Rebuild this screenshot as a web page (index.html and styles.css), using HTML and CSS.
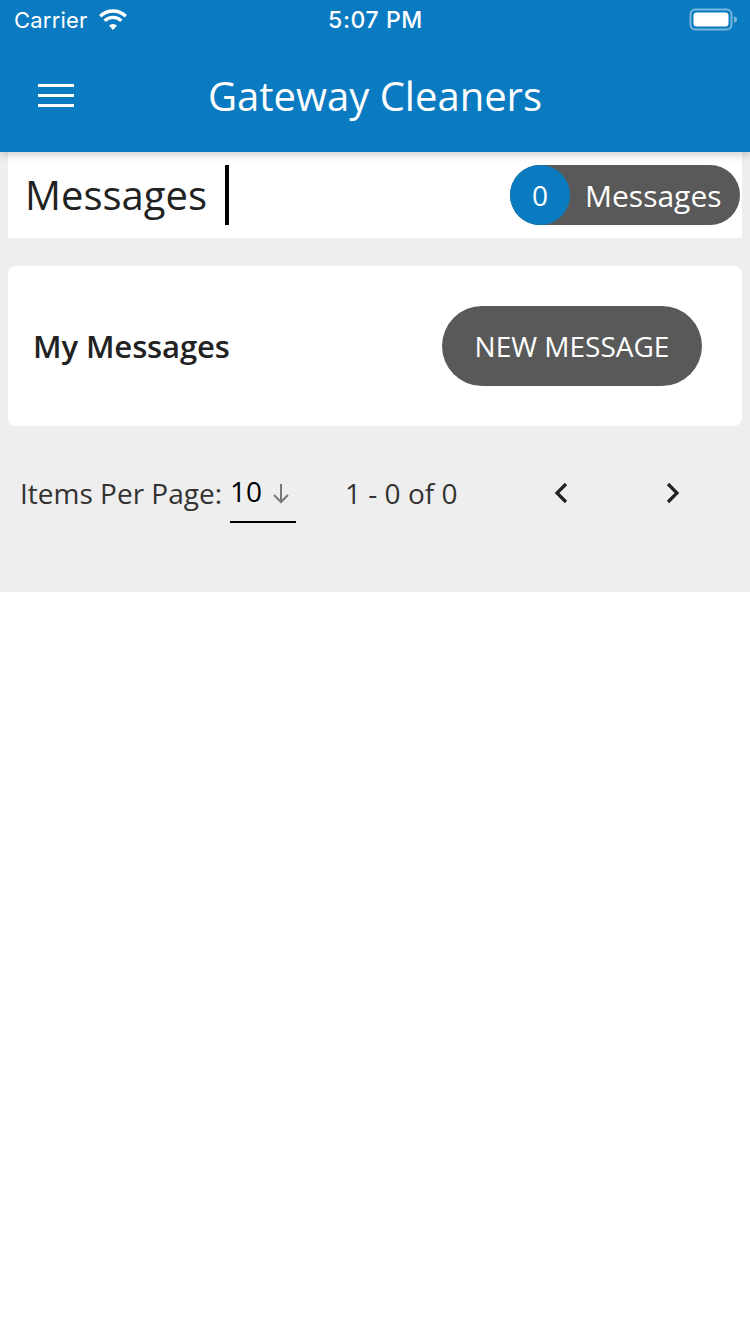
FILE: index.html
```html
<!DOCTYPE html>
<html>
<head>
<meta charset="utf-8">
<link rel="stylesheet" href="styles.css">
</head>
<body>
<header class="topbar">
  <div class="status">
    <div class="status-left">
      <span class="carrier">Carrier</span>
      <svg class="wifi" width="30" height="23" viewBox="0 0 30 23">
        <path d="M15 22 L11 17.6 A6 6 0 0 1 19 17.6 Z" fill="#fff"/>
        <path d="M6.6 12.8 A12 12 0 0 1 23.4 12.8" stroke="#fff" stroke-width="3.4" fill="none"/>
        <path d="M2.2 8.2 A18.5 18.5 0 0 1 27.8 8.2" stroke="#fff" stroke-width="3.4" fill="none"/>
      </svg>
    </div>
    <div class="time">5:07 PM</div>
    <div class="status-right">
      <svg class="battery" width="48" height="24" viewBox="0 0 48 24">
        <rect x="1.5" y="1.5" width="41" height="20" rx="5" fill="none" stroke="#ffffff" stroke-opacity="0.45" stroke-width="2"/>
        <rect x="4.5" y="4.5" width="35" height="14" rx="3" fill="#fff"/>
        <path d="M45 8.5 a3 3 0 0 1 0 6 Z" fill="#ffffff" fill-opacity="0.45"/>
      </svg>
    </div>
  </div>
  <div class="appbar">
    <button class="menu" aria-label="menu">
      <span></span><span></span><span></span>
    </button>
    <h1 class="title">Gateway Cleaners</h1>
  </div>
</header>

<main class="main">
  <section class="pagehead">
    <h2 class="pagetitle">Messages</h2>
    <div class="caret"></div>
    <div class="counter">
      <span class="count">0</span>
      <span class="count-label">Messages</span>
    </div>
  </section>

  <section class="card">
    <h3 class="card-title">My Messages</h3>
    <button class="btn">NEW MESSAGE</button>
  </section>

  <section class="pager">
    <span class="ipp-label">Items Per Page:</span>
    <div class="select">
      <span class="select-value">10</span>
      <svg class="select-arrow" width="18" height="22" viewBox="0 0 18 22">
        <path d="M9 2 V20 M2 13 L9 20 L16 13" stroke="#777" stroke-width="2" fill="none"/>
      </svg>
    </div>
    <span class="range">1 - 0 of 0</span>
    <div class="nav">
      <svg class="chev" width="16" height="22" viewBox="0 0 16 22">
        <path d="M13 2 L4 11 L13 20" stroke="#222" stroke-width="3.2" fill="none"/>
      </svg>
      <svg class="chev" width="16" height="22" viewBox="0 0 16 22">
        <path d="M3 2 L12 11 L3 20" stroke="#222" stroke-width="3.2" fill="none"/>
      </svg>
    </div>
  </section>
</main>
</body>
</html>
```

FILE: styles.css
```css
* { box-sizing: border-box; }

body {
  margin: 0;
  font-family: "Open Sans", "Liberation Sans", sans-serif;
  background: #ffffff;
  color: #222;
}

.topbar {
  background: #0b7bc1;
  height: 152px;
  position: relative;
  z-index: 2;
  box-shadow: 0 3px 8px rgba(0, 0, 0, 0.18);
}

.status {
  height: 40px;
  display: flex;
  align-items: center;
  justify-content: space-between;
  padding: 0 13px 0 14px;
  color: #fff;
}

.status-left {
  display: flex;
  align-items: center;
  gap: 10px;
  width: 200px;
}

.carrier {
  font-family: "Inter", "Liberation Sans", sans-serif;
  font-size: 22px;
  letter-spacing: 0.2px;
}

.wifi { margin-top: -1px; }

.time {
  font-family: "Inter", "Liberation Sans", sans-serif;
  font-size: 23px;
  font-weight: 500;
  letter-spacing: 0.6px;
}

.status-right {
  width: 200px;
  display: flex;
  justify-content: flex-end;
}

.appbar {
  height: 112px;
  display: flex;
  align-items: center;
}

.menu {
  background: none;
  border: 0;
  padding: 0;
  margin-left: 38px;
  width: 36px;
  height: 23px;
  display: flex;
  flex-direction: column;
  justify-content: space-between;
  margin-top: -2px;
}

.menu span {
  display: block;
  height: 3px;
  background: #fff;
}

.title {
  margin: 0;
  flex: 1;
  text-align: center;
  color: #fff;
  font-weight: 400;
  font-size: 40px;
  margin-left: -74px;
  margin-top: -2px;
}

.main {
  background: #eeeeee;
  height: 440px;
  padding: 0 8px;
  position: relative;
  z-index: 1;
}

.pagehead {
  background: #fff;
  height: 86px;
  display: flex;
  align-items: center;
  padding: 0 2px 0 17px;
}

.pagetitle {
  margin: 0;
  font-size: 40px;
  font-weight: 400;
  color: #222;
  margin-top: -2px;
}

.caret {
  width: 4px;
  height: 60px;
  background: #000;
  margin-left: 18px;
}

.counter {
  margin-left: auto;
  display: flex;
  align-items: center;
  background: #595959;
  border-radius: 30px;
  height: 60px;
  width: 230px;
}

.count {
  width: 60px;
  height: 60px;
  border-radius: 50%;
  background: #0b7bc1;
  color: #fff;
  font-size: 28px;
  display: flex;
  align-items: center;
  justify-content: center;
}

.count-label {
  color: #fff;
  font-size: 30px;
  margin-left: 15px;
}

.card {
  margin-top: 28px;
  background: #fff;
  border-radius: 8px;
  height: 160px;
  display: flex;
  align-items: center;
  justify-content: space-between;
  padding: 0 40px 0 25px;
}

.card-title {
  margin: 0;
  font-size: 31px;
  font-weight: 600;
  color: #222;
  letter-spacing: -0.1px;
}

.btn {
  background: #595959;
  color: #fff;
  border: 0;
  border-radius: 40px;
  height: 80px;
  width: 260px;
  font-family: "Open Sans", "Liberation Sans", sans-serif;
  font-size: 28px;
  font-weight: 400;
  padding: 0;
}

.pager {
  display: flex;
  align-items: flex-start;
  padding: 50px 0 0 12px;
  color: #333;
  font-size: 28px;
  line-height: 34px;
}

.select {
  margin-left: 8px;
  display: flex;
  align-items: flex-start;
  width: 66px;
  height: 47px;
  border-bottom: 2px solid #000;
}

.select-value {
  color: #000;
  margin-top: -2px;
}

.select-arrow { margin-left: 10px; margin-top: 6px; }

.range {
  margin-left: 49px;
}

.nav {
  display: flex;
  gap: 96px;
  margin-left: 96px;
  padding-top: 6px;
}
```
